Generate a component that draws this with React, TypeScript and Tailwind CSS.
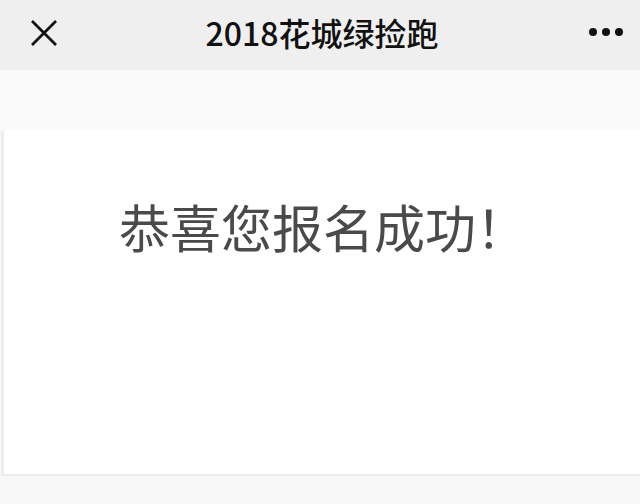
export default function App() {
  return (
    <div
      className="w-[640px] h-[504px] overflow-hidden bg-[#f8f8f8] flex flex-col"
      style={{ fontFamily: '"Noto Sans CJK SC", "Noto Sans", sans-serif' }}
    >
      {/* Nav bar */}
      <div className="h-[70px] shrink-0 bg-[#efefef] relative flex items-center justify-center">
        <svg width="28" height="28" viewBox="0 0 28 28" className="absolute left-[30px] top-[19px]">
          <path d="M2 2 L26 26 M26 2 L2 26" stroke="#111" strokeWidth="2.8" fill="none" />
        </svg>
        <div className="text-[32px] font-medium text-[#111] leading-none pl-[4px] -mt-[7px]">
          2018花城绿捡跑
        </div>
        <div className="absolute right-[17px] top-[28px] flex gap-[5px] items-center">
          <span className="w-[8px] h-[8px] rounded-full bg-[#111]" />
          <span className="w-[8px] h-[8px] rounded-full bg-[#111]" />
          <span className="w-[8px] h-[8px] rounded-full bg-[#111]" />
        </div>
      </div>

      <div className="h-[60px] shrink-0 bg-[#fafafa]" />

      {/* Card */}
      <div className="h-[346px] shrink-0 bg-white border-l-[3px] border-b-[2px] border-[#ededed] ml-[1px] pt-[71px] pl-[115px]">
        <div className="text-[51px] text-[#4a4a4a] leading-none">恭喜您报名成功！</div>
      </div>
    </div>
  );
}
